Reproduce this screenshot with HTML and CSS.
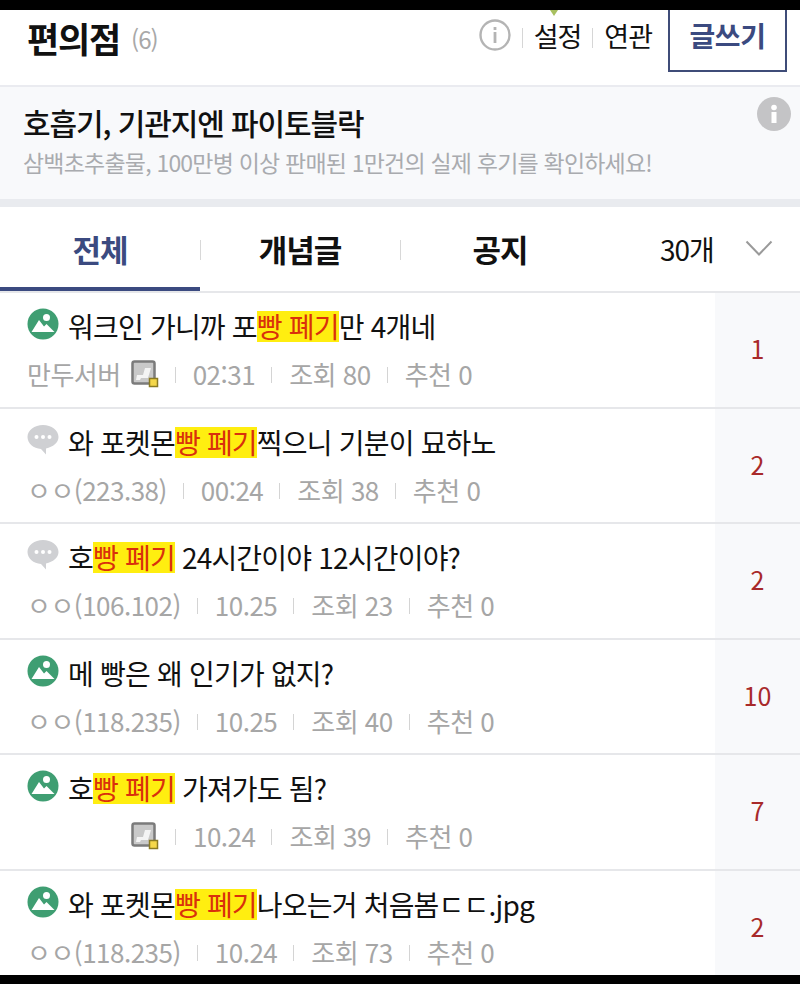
FILE: index.html
```html
<!DOCTYPE html>
<html lang="ko">
<head>
  <meta charset="utf-8">
  <title>편의점</title>
  <link rel="stylesheet" href="styles.css">
</head>
<body>
  <div class="screen">
    <header class="top">
      <h1 class="top-title">편의점</h1>
      <span class="top-count">(6)</span>
      <span class="top-mark"></span>
      <svg class="top-info" viewBox="0 0 32 32"><circle cx="16" cy="16" r="14.5" fill="none" stroke="#b4b4b4" stroke-width="2.4"/><rect x="14.6" y="13" width="2.800" height="11" fill="#b4b4b4"/><rect x="14.6" y="8" width="2.800" height="3" fill="#b4b4b4"/></svg>
      <a class="top-link first">설정</a>
      <a class="top-link">연관</a>
      <a class="write-btn">글쓰기</a>
    </header>

    <section class="notice">
      <h2 class="notice-title">호흡기, 기관지엔 파이토블락</h2>
      <p class="notice-sub">삼백초추출물, 100만병 이상 판매된 1만건의 실제 후기를 확인하세요!</p>
      <svg class="notice-info" viewBox="0 0 34 34"><circle cx="17" cy="17" r="17" fill="#c4c4c6"/><rect x="14.5" y="15" width="5" height="11" fill="#fff"/><circle cx="17" cy="10.5" r="2.8" fill="#fff"/></svg>
    </section>

    <nav class="tabs">
      <a class="tab active">전체</a>
      <a class="tab">개념글</a>
      <a class="tab">공지</a>
      <span class="tabs-count">30개</span>
      <svg class="tabs-arrow" viewBox="0 0 28 16"><path d="M1.5 1.5 14 14.5 26.500 1.500" fill="none" stroke="#9a9a9a" stroke-width="2"/></svg>
    </nav>

    <ul class="list">
      <li class="row">
        <div class="row-main">
          <div class="subject">
            <svg class="ico"><use href="#ico-pic"/></svg>
            <span>워크인 가니까 포<mark>빵 폐기</mark>만 4개네</span>
          </div>
          <div class="meta">
            <span>만두서버</span>
            <svg class="badge"><use href="#ico-badge"/></svg>
            <span class="sep">02:31</span><span class="sep">조회 80</span><span class="sep">추천 0</span>
          </div>
        </div>
        <div class="reply">1</div>
      </li>
      <li class="row">
        <div class="row-main">
          <div class="subject">
            <svg class="ico"><use href="#ico-talk"/></svg>
            <span>와 포켓몬<mark>빵 폐기</mark>찍으니 기분이 묘하노</span>
          </div>
          <div class="meta">
            <span>ㅇㅇ(223.38)</span>
            <span class="sep">00:24</span><span class="sep">조회 38</span><span class="sep">추천 0</span>
          </div>
        </div>
        <div class="reply">2</div>
      </li>
      <li class="row">
        <div class="row-main">
          <div class="subject">
            <svg class="ico"><use href="#ico-talk"/></svg>
            <span>호<mark>빵 폐기</mark> 24시간이야 12시간이야?</span>
          </div>
          <div class="meta">
            <span>ㅇㅇ(106.102)</span>
            <span class="sep">10.25</span><span class="sep">조회 23</span><span class="sep">추천 0</span>
          </div>
        </div>
        <div class="reply">2</div>
      </li>
      <li class="row">
        <div class="row-main">
          <div class="subject">
            <svg class="ico"><use href="#ico-pic"/></svg>
            <span>메 빵은 왜 인기가 없지?</span>
          </div>
          <div class="meta">
            <span>ㅇㅇ(118.235)</span>
            <span class="sep">10.25</span><span class="sep">조회 40</span><span class="sep">추천 0</span>
          </div>
        </div>
        <div class="reply">10</div>
      </li>
      <li class="row">
        <div class="row-main">
          <div class="subject">
            <svg class="ico"><use href="#ico-pic"/></svg>
            <span>호<mark>빵 폐기</mark> 가져가도 됨?</span>
          </div>
          <div class="meta no-name">
            <svg class="badge"><use href="#ico-badge"/></svg>
            <span class="sep">10.24</span><span class="sep">조회 39</span><span class="sep">추천 0</span>
          </div>
        </div>
        <div class="reply">7</div>
      </li>
      <li class="row">
        <div class="row-main">
          <div class="subject">
            <svg class="ico"><use href="#ico-pic"/></svg>
            <span>와 포켓몬<mark>빵 폐기</mark>나오는거 처음봄ㄷㄷ.jpg</span>
          </div>
          <div class="meta">
            <span>ㅇㅇ(118.235)</span>
            <span class="sep">10.24</span><span class="sep">조회 73</span><span class="sep">추천 0</span>
          </div>
        </div>
        <div class="reply">2</div>
      </li>
    </ul>
  </div>

  <svg class="defs" width="0" height="0">
    <symbol id="ico-pic" viewBox="0 0 32 32">
      <circle cx="16" cy="16" r="15.500" fill="#3f9e72"/>
      <circle cx="19.500" cy="9.500" r="3.500" fill="#fff"/>
      <path d="M4.500 24 12 12l5 6.500 2.500-2.500 8 8z" fill="#fff"/>
    </symbol>
    <symbol id="ico-talk" viewBox="0 0 32 32">
      <path d="M16 1C7.500 1 .5 6 .5 13c0 6.500 6 11.500 13.500 12l5 5.500v-6C26 23 31.500 18.500 31.500 13 31.500 6 24.500 1 16 1z" fill="#cfd0d3"/>
      <circle cx="9.500" cy="13" r="2" fill="#fff"/><circle cx="16" cy="13" r="2" fill="#fff"/><circle cx="22.500" cy="13" r="2" fill="#fff"/>
    </symbol>
    <symbol id="ico-badge" viewBox="0 0 28 28">
      <rect x="1.500" y="1.500" width="22" height="22" rx="2" fill="#c9c9c9" stroke="#7b7b7b" stroke-width="2.500"/>
      <path d="M6 15h6l2-7h6l-3 10H10l-1 2H5z" fill="#f4f4f4"/>
      <rect x="18.500" y="18.500" width="8" height="8" fill="#f5d74a" stroke="#8a7a22" stroke-width="1.500"/>
    </symbol>
  </svg>
</body>
</html>
```

FILE: styles.css
```css
* { box-sizing: border-box; }

html, body { margin: 0; padding: 0; background: #000; }

body {
  font-family: "Noto Sans CJK KR", "Noto Sans", sans-serif;
  color: #111;
}

.defs { display: block; overflow: hidden; }

.screen {
  height: 965px;
  margin-top: 10px;
  background: #fff;
  overflow: hidden;
  display: flex;
  flex-direction: column;
}

/* top bar */
.top {
  height: 77px;
  flex: none;
  display: flex;
  align-items: flex-start;
  position: relative;
  padding: 0 13px 0 27px;
  border-bottom: 2px solid #eaebf0;
}
.top-title {
  margin: 4px 0 0;
  font-size: 35px;
  line-height: 48px;
  font-weight: 700;
  letter-spacing: -1.200px;
}
.top-count {
  margin: 11px 0 0 11px;
  font-size: 24px;
  line-height: 36px;
  color: #a8a8a8;
  letter-spacing: -1px;
}
.top-mark {
  position: absolute;
  top: 0;
  left: 550px;
  border: 4px solid transparent;
  border-top: 6px solid #a8c060;
}
.top-info { width: 32px; height: 32px; margin: 9px 0 0 auto; }
.top-link {
  position: relative;
  margin: 6px 0 0 23px;
  font-size: 27px;
  line-height: 40px;
  letter-spacing: -1px;
}
.top-link::before {
  content: "";
  position: absolute;
  left: -12px;
  top: 12px;
  height: 20px;
  width: 1px;
  background: #d6d6d6;
}
.write-btn {
  width: 119px;
  height: 62px;
  margin-left: 16px;
  border: 2px solid #3f4c78;
  border-top: 0;
  text-align: center;
  font-size: 28px;
  line-height: 50px;
  font-weight: 700;
  letter-spacing: -0.500px;
  color: #3b4a80;
}

/* ad notice */
.notice {
  height: 112px;
  flex: none;
  position: relative;
  padding: 14px 22px 0 23px;
  background: #f8f9fb;
}
.notice-title {
  margin: 0;
  font-size: 30px;
  line-height: 42px;
  font-weight: 500;
  letter-spacing: -1.100px;
}
.notice-sub {
  margin: 3px 0 0;
  font-size: 23px;
  line-height: 32px;
  letter-spacing: -0.800px;
  color: #a9abaf;
}
.notice-info {
  position: absolute;
  top: 10px;
  right: 9px;
  width: 34px;
  height: 34px;
}

/* tabs */
.tabs {
  height: 94px;
  flex: none;
  display: flex;
  align-items: flex-start;
  border-top: 8px solid #e9ebef;
  border-bottom: 2px solid #e6e7ea;
}
.tab {
  position: relative;
  width: 200px;
  height: 84px;
  text-align: center;
  font-size: 31px;
  line-height: 84px;
  font-weight: 700;
  letter-spacing: -1px;
  color: #111;
}
.tab + .tab::before {
  content: "";
  position: absolute;
  left: 0;
  top: 33px;
  height: 20px;
  width: 1px;
  background: #d8d8d8;
}
.tab.active { color: #3b4a80; border-bottom: 4px solid #3b4a80; }
.tabs-count {
  position: absolute;
  left: 660px;
  font-size: 28px;
  line-height: 84px;
  letter-spacing: -1px;
}
.tabs-arrow {
  position: absolute;
  left: 745px;
  margin-top: 33px;
  width: 28px;
  height: 16px;
}

/* article list */
.list { list-style: none; margin: 0; padding: 0; }
.row {
  height: 115.600px;
  display: flex;
  border-bottom: 2px solid #e6e7ea;
}
.row:last-child { border-bottom: 0; }
.row-main { flex: 1; min-width: 0; padding: 11px 0 0 27px; }
.subject {
  display: flex;
  align-items: flex-start;
  font-size: 28px;
  line-height: 44px;
  letter-spacing: -0.800px;
  white-space: nowrap;
}
.ico { width: 32px; height: 32px; flex: none; margin: 4px 9px 0 0; }
.subject mark {
  display: inline-block;
  line-height: 31px;
  background: #ffee10;
  color: #d9300c;
}
.meta {
  display: flex;
  align-items: center;
  margin-top: 10px;
  font-size: 26px;
  line-height: 32px;
  color: #a6a6a6;
  white-space: nowrap;
  letter-spacing: -0.500px;
}
.meta.no-name { padding-left: 104px; }
.badge { width: 28px; height: 28px; margin-left: 10px; flex: none; }
.meta.no-name .badge { margin-left: 0; }
.sep { position: relative; margin-left: 34px; }
.sep::before {
  content: "";
  position: absolute;
  left: -18px;
  top: 9px;
  height: 16px;
  width: 1px;
  background: #d4d4d4;
}
.reply {
  width: 85px;
  flex: none;
  background: #f8f9fb;
  text-align: center;
  font-size: 25px;
  line-height: 111px;
  color: #a82a2a;
}
```
